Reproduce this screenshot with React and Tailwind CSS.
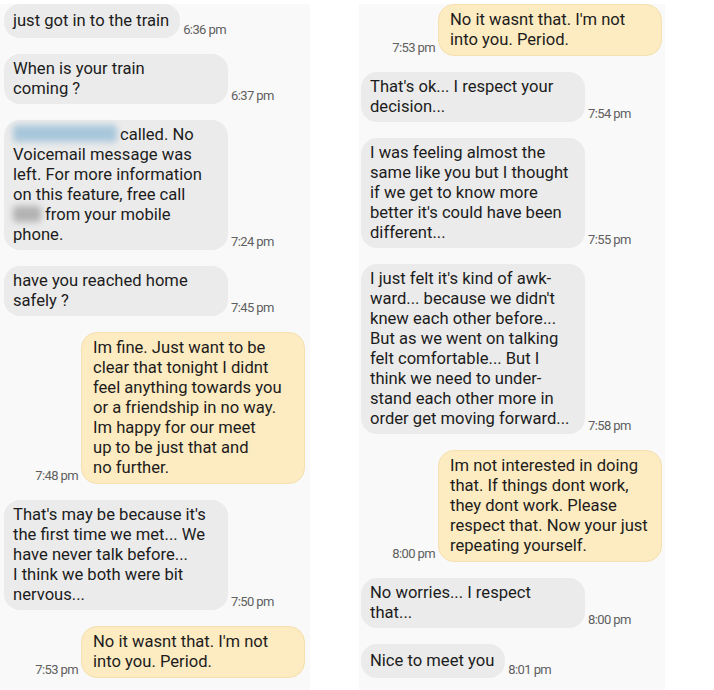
import React from 'react';

const left = [
  { me: false, time: '6:36 pm', lines: ['just got in to the train'] },
  { me: false, time: '6:37 pm', wide: true, lines: ['When is your train', 'coming ?'] },
  { me: false, time: '7:24 pm', wide: true, lines: ['BLUR1', 'Voicemail message was', 'left. For more information', 'on this feature, free call', 'BLUR2', 'phone.'] },
  { me: false, time: '7:45 pm', wide: true, lines: ['have you reached home', 'safely ?'] },
  { me: true, time: '7:48 pm', lines: ['Im fine. Just want to be', 'clear that tonight I didnt', 'feel anything towards you', 'or a friendship in no way.', 'Im happy for our meet', 'up to be just that and', 'no further.'] },
  { me: false, time: '7:50 pm', wide: true, lines: ["That's may be because it's", 'the first time we met... We', 'have never talk before...', 'I think we both were bit', 'nervous...'] },
  { me: true, time: '7:53 pm', lines: ["No it wasnt that. I'm not", 'into you. Period.'] },
];

const right = [
  { me: true, time: '7:53 pm', lines: ["No it wasnt that. I'm not", 'into you. Period.'] },
  { me: false, time: '7:54 pm', wide: true, lines: ["That's ok... I respect your", 'decision...'] },
  { me: false, time: '7:55 pm', wide: true, lines: ['I was feeling almost the', 'same like you but I thought', 'if we get to know more', "better it's could have been", 'different...'] },
  { me: false, time: '7:58 pm', wide: true, lines: ["I just felt it's kind of awk-", "ward... because we didn't", 'knew each other before...', 'But as we went on talking', 'felt comfortable... But I', 'think we need to under-', 'stand each other more in', 'order get moving forward...'] },
  { me: true, time: '8:00 pm', lines: ['Im not interested in doing', 'that. If things dont work,', 'they dont work. Please', 'respect that. Now your just', 'repeating yourself.'] },
  { me: false, time: '8:00 pm', wide: true, lines: ['No worries... I respect', 'that...'] },
  { me: false, time: '8:01 pm', lines: ['Nice to meet you'] },
];

function Line({ text }) {
  if (text === 'BLUR1') {
    return (
      <div className="whitespace-nowrap">
        <span className="inline-block w-[104px] h-[17px] align-[-2px] bg-[#a9c7db] blur-[3px] rounded-sm mr-[3px]" />
        called. No
      </div>
    );
  }
  if (text === 'BLUR2') {
    return (
      <div className="whitespace-nowrap">
        <span className="inline-block w-[28px] h-[16px] align-[-2px] bg-[#b3b3b3] blur-[3px] rounded-sm mr-[4px]" />
        from your mobile
      </div>
    );
  }
  return <div className="whitespace-nowrap">{text}</div>;
}

function Time({ children }) {
  return (
    <div className="text-[13px] leading-[16px] tracking-[-0.6px] text-[#5f5f5f] whitespace-nowrap">
      {children}
    </div>
  );
}

function Msg({ m }) {
  if (m.me) {
    return (
      <div className="flex items-end justify-end gap-[3px]">
        <Time>{m.time}</Time>
        <div className="w-[224px] min-h-[34px] pl-[11px] pr-[6px] py-[5px] rounded-[16px] bg-[#fdebc1] border border-[#f4e0b0] text-[16.6px] leading-[20px] text-[#1c1c1c]">
          {m.lines.map((l, i) => <Line key={i} text={l} />)}
        </div>
      </div>
    );
  }
  return (
    <div className="flex items-end gap-[3px]">
      <div
        className={
          (m.wide ? 'w-[224px] ' : '') +
          'min-h-[34px] flex flex-col justify-center pl-[9px] pr-[11px] py-[5px] rounded-[16px] bg-[#ebebeb] text-[16.6px] leading-[20px] text-[#1c1c1c]'
        }
      >
        {m.lines.map((l, i) => <Line key={i} text={l} />)}
      </div>
      <Time>{m.time}</Time>
    </div>
  );
}

export default function App() {
  return (
    <div className="w-[714px] h-[690px] bg-white flex overflow-hidden font-['Roboto','Liberation_Sans',sans-serif]">
      <div className="w-[310px] mt-[4px] bg-[#f9f9f9] pl-[4px] pr-[5px] flex flex-col gap-4">
        {left.map((m, i) => <Msg key={i} m={m} />)}
      </div>
      <div className="w-[306px] ml-[49px] mt-[4px] bg-[#f9f9f9] pl-[2px] pr-[3px] flex flex-col gap-4">
        {right.map((m, i) => <Msg key={i} m={m} />)}
      </div>
    </div>
  );
}
